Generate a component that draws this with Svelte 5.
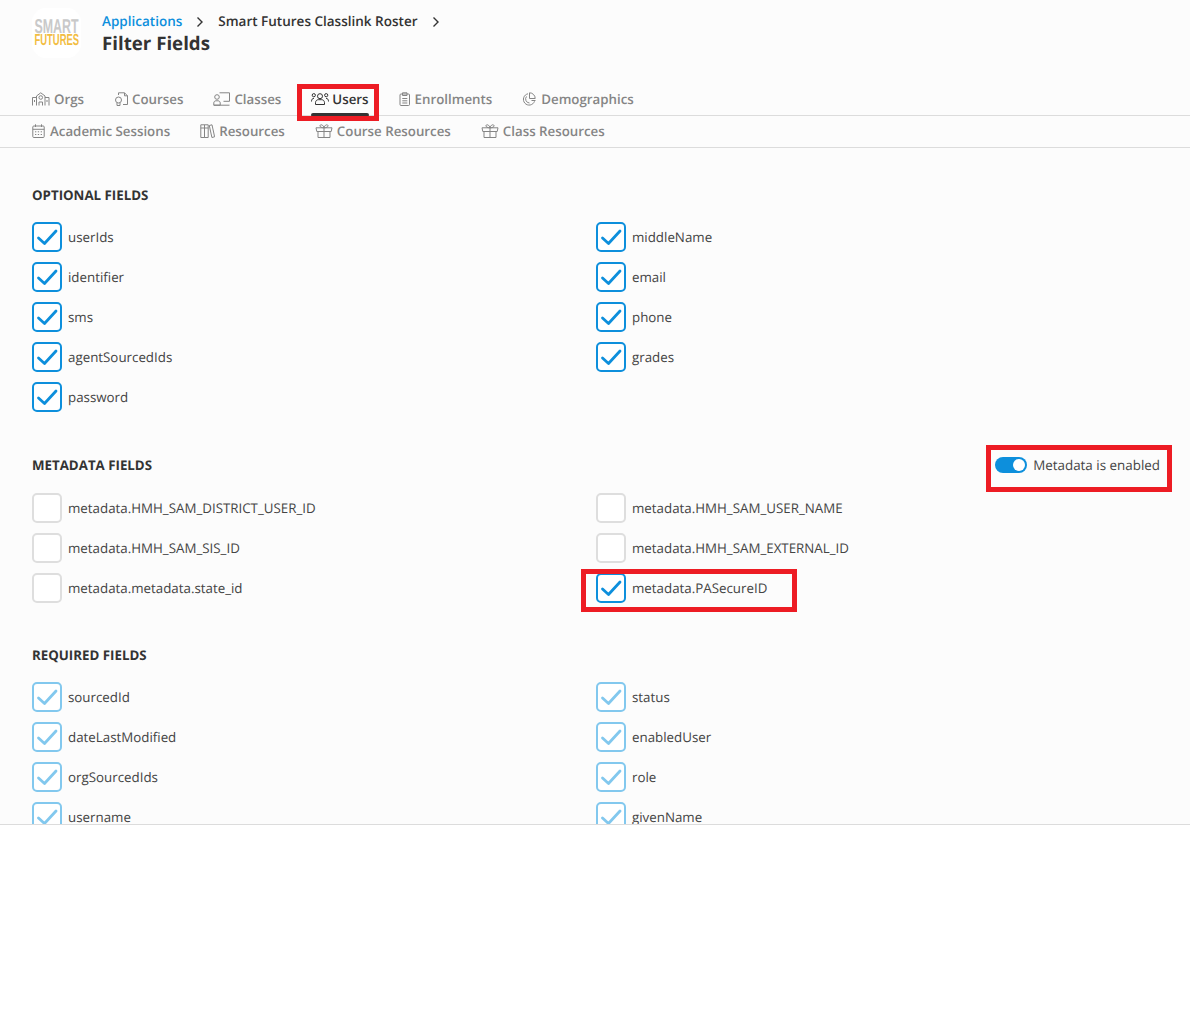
<script>
  const row1 = [
    { label: "Orgs", icon: "orgs" },
    { label: "Courses", icon: "courses" },
    { label: "Classes", icon: "classes" },
    { label: "Users", icon: "users", active: true },
    { label: "Enrollments", icon: "enroll" },
    { label: "Demographics", icon: "demo" }
  ]
  const row2 = [
    { label: "Academic Sessions", icon: "calendar" },
    { label: "Resources", icon: "books" },
    { label: "Course Resources", icon: "gift" },
    { label: "Class Resources", icon: "gift" }
  ]
  // icon widths differ, so the label offset follows the glyph as in the tabs
  const widths = { orgs: 18, courses: 14, classes: 17, users: 18, enroll: 12, demo: 15, calendar: 13, books: 15, gift: 18 }
  const optional = [
    ["userIds", true], ["middleName", true],
    ["identifier", true], ["email", true],
    ["sms", true], ["phone", true],
    ["agentSourcedIds", true], ["grades", true],
    ["password", true]
  ]
  const metadata = [
    ["metadata.HMH_SAM_DISTRICT_USER_ID", false], ["metadata.HMH_SAM_USER_NAME", false],
    ["metadata.HMH_SAM_SIS_ID", false], ["metadata.HMH_SAM_EXTERNAL_ID", false],
    ["metadata.metadata.state_id", false], ["metadata.PASecureID", true, true]
  ]
  const required = [
    "sourcedId", "status", "dateLastModified", "enabledUser",
    "orgSourcedIds", "role", "username", "givenName"
  ]
</script>

{#snippet icon(name)}
  <svg class="icon {name}" width={widths[name]} height="14" viewBox="0 0 {widths[name]} 14" fill="none" stroke="currentColor" stroke-width="1">
    {#if name === "orgs"}
      <path d="M.5 13.500v-8h4M17 13.500v-8h-4M4.500 13.500V4L8.750 .8 13 4v9.500M7 13.500v-3.500h3.500v3.500M2.500 8v2M15 8v2" />
      <circle cx="8.750" cy="5.500" r="1.800" />
    {:else if name === "courses"}
      <path d="M4.500 3V.8h6l3 3v8.700h-4.500M10.500 .8v3h3" />
      <circle cx="4.500" cy="8" r="3" />
      <path d="M3 11v2.500h3V11" />
    {:else if name === "classes"}
      <path d="M6.500 .8h10v8.500h-6" />
      <circle cx="4" cy="5" r="2.300" />
      <path d="M.8 13.200v-2.200c0-1.300 .9-2.200 2.200-2.200h2c1.300 0 2.200 .9 2.200 2.200v2.200zM.8 13.200h15.700" />
    {:else if name === "users"}
      <circle cx="9" cy="4.200" r="2.500" />
      <circle cx="2.800" cy="3.200" r="1.600" />
      <circle cx="15.200" cy="3.200" r="1.600" />
      <path d="M4.500 12.500v-1.800c0-1.800 1.300-3 2.800-3h3.400c1.500 0 2.800 1.200 2.800 3v1.800zM.5 9.500c0-2 .9-3.200 2.500-3.200M17.500 9.500c0-2-.9-3.200-2.500-3.200" />
    {:else if name === "enroll"}
      <rect x="1" y="2" width="9.500" height="11.500" rx="1" />
      <path d="M3.500 .8h4.500v2.700h-4.500zM3.300 6.500h5M3.300 8.800h5M3.300 11h5" />
    {:else if name === "demo"}
      <path d="M6 1.800a5.700 5.700 0 1 0 6.500 7.500" />
      <path d="M7.500 .8a5.700 5.700 0 0 1 5.700 5.700H7.500zM4.500 4.500a4 4 0 0 0 3 6.500M13.500 8.500h-4" />
    {:else if name === "calendar"}
      <rect x=".8" y="2" width="11.400" height="11.500" rx="1" />
      <path d="M.8 5.300h11.400M3.500 .3v2.700M9.500 .3v2.700M3 7.800h1.300M5.800 7.800h1.300M8.700 7.800H10M3 10.500h1.300M5.800 10.500h1.300M8.700 10.500H10" />
    {:else if name === "books"}
      <path d="M.8 .8h3.700v12.700H.8zM4.500 .8h3.700v12.700H4.500zM.8 4h3.700M4.500 4h3.700M9.300 1.500l2.700-.7 2.600 12-2.700 .7z" />
    {:else if name === "gift"}
      <path d="M3 7.500v6h12v-6M1 3.800h16l-.8 3.700H1.800zM9 3.800v9.700M9 3.800C7 3.800 4.500 3 5 1.500s3.500-.7 4 2.300c.5-3 3.500-3.800 4-2.300s-2 2.300-4 2.300z" />
    {/if}
  </svg>
{/snippet}

{#snippet check(on, muted)}
  <span class="box" class:on class:muted>
    {#if on}
      <svg viewBox="0 0 30 30" fill="none">
        <path d="M6.500 16l6 5.500L24 9" />
      </svg>
    {/if}
  </span>
{/snippet}

<div class="page">
  <header>
    <div class="logo">
      <span class="smart">SMART</span>
      <span class="futures">FUTURES</span>
    </div>
    <div class="titles">
      <nav class="crumbs">
        <a href="#apps">Applications</a>
        <svg class="chev" viewBox="0 0 8 12"><path d="M1.500 1.500L6 6l-4.500 4.500" /></svg>
        <span>Smart Futures Classlink Roster</span>
        <svg class="chev" viewBox="0 0 8 12"><path d="M1.500 1.500L6 6l-4.500 4.500" /></svg>
      </nav>
      <h1>Filter Fields</h1>
    </div>
  </header>

  <div class="tabs first">
    {#each row1 as t}
      <div class="tab" class:active={t.active}>
        {@render icon(t.icon)}
        <span>{t.label}</span>
      </div>
    {/each}
  </div>
  <div class="tabs second">
    {#each row2 as t}
      <div class="tab">
        {@render icon(t.icon)}
        <span>{t.label}</span>
      </div>
    {/each}
  </div>

  <main>
    <div class="head first-head"><h2>OPTIONAL FIELDS</h2></div>
    <div class="fields">
      {#each optional as [name, on]}
        <div class="field">{@render check(on, false)}<span>{name}</span></div>
      {/each}
    </div>

    <div class="head meta-head">
      <h2>METADATA FIELDS</h2>
      <div class="toggle-wrap">
        <span class="toggle"><span class="knob"></span></span>
        <span>Metadata is enabled</span>
      </div>
    </div>
    <div class="fields">
      {#each metadata as [name, on, marked]}
        <div class="field">
          {@render check(on, false)}<span>{name}</span>
          {#if marked}<div class="mark-secure"></div>{/if}
        </div>
      {/each}
    </div>

    <div class="head req-head"><h2>REQUIRED FIELDS</h2></div>
    <div class="fields">
      {#each required as name}
        <div class="field">{@render check(true, true)}<span>{name}</span></div>
      {/each}
    </div>
  </main>
</div>

<style>
  :global(body) {
    background: #fff;
    font-family: "Open Sans", "Noto Sans", sans-serif;
    color: #333;
    text-rendering: geometricPrecision;
  }
  .page {
    height: 825px;
    box-sizing: border-box;
    border-bottom: 1px solid #dcdcdc;
    background: #fcfcfc;
    overflow: hidden;
    position: relative;
  }
  header {
    height: 84px;
    box-sizing: border-box;
    display: flex;
    padding: 8px 0 0 32px;
    gap: 21px;
  }
  .logo {
    width: 49px;
    height: 50px;
    border-radius: 14px;
    background: #fff;
    display: flex;
    flex-direction: column;
    align-items: center;
    justify-content: center;
    font-family: "Liberation Sans", sans-serif;
    font-weight: bold;
  }
  .smart {
    color: #c9c9c9;
    font-size: 20px;
    line-height: 15px;
    transform: scaleX(0.62);
  }
  .futures {
    color: #f2bd42;
    font-size: 16px;
    line-height: 12px;
    transform: scaleX(0.59);
    white-space: nowrap;
  }
  .titles {
    padding-top: 2px;
  }
  .crumbs {
    display: flex;
    align-items: center;
    height: 21px;
    font-size: 13.500px;
    font-weight: 600;
    color: #333;
  }
  .crumbs a {
    color: #0d8fdc;
    text-decoration: none;
  }
  .chev {
    width: 8px;
    height: 12px;
    margin: 2px 14px 0;
    fill: none;
    stroke: #333;
    stroke-width: 1.4;
  }
  h1 {
    margin: 1px 0 0;
    font-size: 18.700px;
    line-height: 24px;
    font-weight: 700;
    color: #333;
  }
  .tabs {
    display: flex;
    gap: 30px;
    padding-left: 32px;
    border-bottom: 1px solid #dcdcdc;
    color: #858585;
    font-size: 13.300px;
    font-weight: 600;
  }
  .tabs.first {
    height: 31px;
  }
  .tabs.second {
    height: 31px;
  }
  .tab {
    display: flex;
    align-items: center;
    gap: 4px;
    height: 100%;
    position: relative;
    white-space: nowrap;
    box-sizing: border-box;
  }
  .first .tab {
    padding-bottom: 2px;
  }
  .second .tab {
    padding-bottom: 1px;
  }
  .tab.active {
    color: #333;
  }
  .tab.active::after {
    content: "";
    position: absolute;
    left: 0;
    right: 0;
    bottom: -2px;
    height: 4px;
    border-radius: 2px;
    background: #333;
  }
  .tab.active::before {
    content: "";
    position: absolute;
    left: -14px;
    right: -10px;
    top: 0;
    height: 37px;
    box-sizing: border-box;
    border: 5px solid #ed1c24;
    z-index: 2;
  }
  .icon {
    flex: none;
  }
  .icon.users {
    margin-right: -1px;
  }
  .icon.calendar {
    margin-right: 1px;
  }
  main {
    padding: 0 32px;
  }
  .head {
    display: flex;
    justify-content: space-between;
    align-items: center;
    height: 20px;
  }
  .first-head {
    margin-top: 37px;
    margin-bottom: 17px;
  }
  .meta-head {
    margin-top: 43px;
    margin-bottom: 18px;
    margin-right: -2px;
  }
  .req-head {
    margin-top: 42px;
    margin-bottom: 17px;
  }
  h2 {
    margin: 0;
    font-size: 13.300px;
    font-weight: 700;
    color: #333;
  }
  .fields {
    display: grid;
    grid-template-columns: 564px 1fr;
    grid-auto-rows: 30px;
    row-gap: 10px;
    font-size: 13.330px;
    color: #444;
  }
  .field {
    display: flex;
    align-items: center;
    gap: 6px;
    position: relative;
  }
  .box {
    width: 30px;
    height: 30px;
    box-sizing: border-box;
    border: 2px solid #dedede;
    border-radius: 5px;
    background: #fff;
    flex: none;
    position: relative;
  }
  .box.on {
    border-color: #0d8fdc;
  }
  .box svg {
    position: absolute;
    left: -2px;
    top: -2px;
    width: 30px;
    height: 30px;
  }
  .box path {
    stroke: #0d8fdc;
    stroke-width: 2.800;
    stroke-linecap: round;
    stroke-linejoin: round;
  }
  .box.muted {
    border-color: #82c8ee;
  }
  .box.muted path {
    stroke: #82c8ee;
  }
  .toggle-wrap {
    display: flex;
    align-items: center;
    gap: 6px;
    font-size: 13.400px;
    color: #444;
    position: relative;
  }
  .toggle-wrap::after {
    content: "";
    position: absolute;
    left: -9px;
    right: -12px;
    top: -11px;
    height: 47px;
    box-sizing: border-box;
    border: 5px solid #ed1c24;
  }
  .toggle {
    width: 32px;
    height: 16px;
    border-radius: 8px;
    background: #0d8fdc;
    position: relative;
    flex: none;
  }
  .knob {
    position: absolute;
    right: 2px;
    top: 2px;
    width: 12px;
    height: 12px;
    border-radius: 50%;
    background: #fff;
  }
  .mark-secure {
    position: absolute;
    left: -15px;
    top: -4px;
    width: 216px;
    height: 43px;
    box-sizing: border-box;
    border: 5px solid #ed1c24;
  }
</style>
